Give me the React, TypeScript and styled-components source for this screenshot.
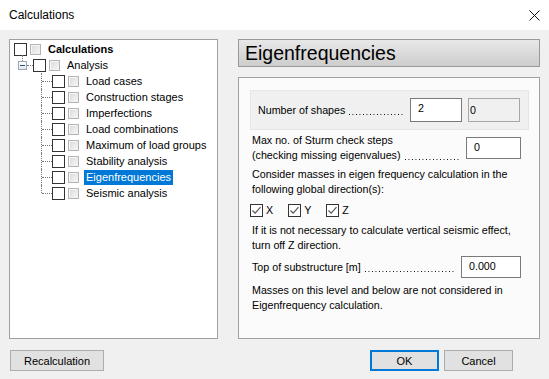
import React from "react"
import styled, { createGlobalStyle } from "styled-components"

const GlobalStyle = createGlobalStyle`
  html, body {
    margin: 0;
    padding: 0;
    background: #f0f0f0;
  }
  body {
    font-family: "Liberation Sans", Arial, sans-serif;
    font-size: 11px;
    color: #000;
  }
`

interface TreeItem {
  label: string
  selected?: boolean
}

const children: TreeItem[] = [
  { label: "Load cases" },
  { label: "Construction stages" },
  { label: "Imperfections" },
  { label: "Load combinations" },
  { label: "Maximum of load groups" },
  { label: "Stability analysis" },
  { label: "Eigenfrequencies", selected: true },
  { label: "Seismic analysis" },
]

const CheckMark = () => (
  <svg width="11" height="11" viewBox="0 0 11 11">
    <path d="M1.5 5.5 L4.2 8.2 L9.5 2.2" fill="none" stroke="#555" strokeWidth="1.2" />
  </svg>
)

const CloseIcon = () => (
  <svg width="11" height="11" viewBox="0 0 11 11">
    <path d="M0.5 0.5 L10.5 10.5 M10.5 0.5 L0.5 10.5" stroke="#111" strokeWidth="1" />
  </svg>
)

const App = () => {
  return (
    <Window>
      <GlobalStyle />
      <TitleBar>
        <Title>Calculations</Title>
        <CloseButton>
          <CloseIcon />
        </CloseButton>
      </TitleBar>
      <Body>
        <Main>
          <TreePanel>
            <TreeRow>
              <BlackBox />
              <GrayBox />
              <NodeText bold>Calculations</NodeText>
            </TreeRow>
            <TreeRow indent={4}>
              <Expander>
                <MinusSign />
              </Expander>
              <HLine width={6} />
              <BlackBox />
              <GrayBox />
              <NodeText>Analysis</NodeText>
            </TreeRow>
            {children.map((c, i) => (
              <TreeRow key={c.label} indent={27}>
                <Connector last={i === children.length - 1} />
                <BlackBox />
                <GrayBox />
                <NodeText selected={c.selected}>{c.label}</NodeText>
              </TreeRow>
            ))}
          </TreePanel>
          <RightColumn>
            <Header>Eigenfrequencies</Header>
            <Content>
              <ShadedBox>
                <LabelLine>
                  <span>Number of shapes</span>
                  <Leader />
                </LabelLine>
                <Input>2</Input>
                <Input disabled>0</Input>
              </ShadedBox>

              <FieldRow mt={3}>
                <MultiLabel>
                  <div>Max no. of Sturm check steps</div>
                  <LabelLine>
                    <span>(checking missing eigenvalues)</span>
                    <Leader />
                  </LabelLine>
                </MultiLabel>
                <Input small>0</Input>
              </FieldRow>

              <Paragraph mt={4}>
                Consider masses in eigen frequency calculation in the
                <br />
                following global direction(s):
              </Paragraph>

              <Checks>
                <CheckItem>
                  <CheckBox>
                    <CheckMark />
                  </CheckBox>
                  X
                </CheckItem>
                <CheckItem>
                  <CheckBox>
                    <CheckMark />
                  </CheckBox>
                  Y
                </CheckItem>
                <CheckItem>
                  <CheckBox>
                    <CheckMark />
                  </CheckBox>
                  Z
                </CheckItem>
              </Checks>

              <Paragraph mt={6}>
                If it is not necessary to calculate vertical seismic effect,
                <br />
                turn off Z direction.
              </Paragraph>

              <FieldRow mt={4}>
                <LabelLine>
                  <span>Top of substructure [m]</span>
                  <Leader />
                </LabelLine>
                <Input small wide>0.000</Input>
              </FieldRow>

              <Paragraph mt={5}>
                Masses on this level and below are not considered in
                <br />
                Eigenfrequency calculation.
              </Paragraph>
            </Content>
          </RightColumn>
        </Main>
        <Footer>
          <Button width={94}>Recalculation</Button>
          <ButtonGroup>
            <Button width={69} primary>
              OK
            </Button>
            <Button width={69}>Cancel</Button>
          </ButtonGroup>
        </Footer>
      </Body>
    </Window>
  )
}

export default App

const Window = styled.div`
  width: 549px;
  height: 379px;
  display: flex;
  flex-direction: column;
  background: #f0f0f0;
  overflow: hidden;
`

const TitleBar = styled.div`
  height: 30px;
  background: #fff;
  display: flex;
  align-items: center;
  justify-content: space-between;
  padding: 0 9px 0 9px;
  box-sizing: border-box;
`

const Title = styled.div`
  font-family: "Liberation Sans", Arial, sans-serif;
  font-size: 12px;
  color: #000;
`

const CloseButton = styled.div`
  width: 11px;
  height: 11px;
  display: flex;
`

const Body = styled.div`
  flex: 1;
  display: flex;
  flex-direction: column;
  padding: 9px 0 0 9px;
`

const Main = styled.div`
  display: flex;
  gap: 20px;
  height: 300px;
`

const TreePanel = styled.div`
  width: 209px;
  box-sizing: border-box;
  border: 1px solid #a0a0a0;
  background: #fff;
  padding: 1px 0 0 4px;
`

const TreeRow = styled.div<{ indent?: number }>`
  height: 16px;
  display: flex;
  align-items: center;
  padding-left: ${(p) => p.indent || 0}px;
`

const BlackBox = styled.span`
  width: 13px;
  height: 13px;
  box-sizing: border-box;
  border: 1px solid #333;
  background: #fff;
  flex-shrink: 0;
`

const GrayBox = styled.span`
  width: 11px;
  height: 11px;
  box-sizing: border-box;
  margin-left: 3px;
  border: 1px solid #b4b4b4;
  background: linear-gradient(135deg, #dadada 0%, #ebebeb 60%, #f6f6f6 100%);
  box-shadow: inset 1px 1px 0 #f6f6f6;
  flex-shrink: 0;
`

const NodeText = styled.span<{ bold?: boolean; selected?: boolean }>`
  margin-left: 5px;
  padding: 1px 2px;
  line-height: 13px;
  font-weight: ${(p) => (p.bold ? "bold" : "normal")};
  background: ${(p) => (p.selected ? "#0078d7" : "transparent")};
  color: ${(p) => (p.selected ? "#fff" : "#000")};
  white-space: nowrap;
`

const Expander = styled.span`
  width: 9px;
  height: 9px;
  box-sizing: border-box;
  border: 1px solid #9aa7b8;
  background: linear-gradient(#fff, #e4e8ee);
  display: flex;
  align-items: center;
  justify-content: center;
  flex-shrink: 0;
  position: relative;

  &::before {
    content: "";
    position: absolute;
    left: 3px;
    top: -7px;
    height: 6px;
    border-left: 1px dotted #777;
  }
`

const MinusSign = styled.span`
  width: 5px;
  height: 1px;
  background: #2b4d80;
`

const HLine = styled.span<{ width: number }>`
  width: ${(p) => p.width}px;
  border-top: 1px dotted #777;
  flex-shrink: 0;
`

const Connector = styled.span<{ last?: boolean }>`
  width: 11px;
  height: 16px;
  position: relative;
  flex-shrink: 0;

  &::before {
    content: "";
    position: absolute;
    left: 0;
    top: 0;
    height: ${(p) => (p.last ? "8px" : "16px")};
    border-left: 1px dotted #777;
  }
  &::after {
    content: "";
    position: absolute;
    left: 1px;
    right: 0;
    top: 8px;
    border-top: 1px dotted #777;
  }
`

const RightColumn = styled.div`
  width: 302px;
  display: flex;
  flex-direction: column;
  gap: 10px;
`

const Header = styled.div`
  height: 28px;
  box-sizing: border-box;
  border: 1px solid #999;
  background: linear-gradient(#e8e8e8, #cdcdcd);
  font-size: 19.5px;
  line-height: 27px;
  padding-left: 6px;
  color: #000;
`

const Content = styled.div`
  flex: 1;
  box-sizing: border-box;
  border: 1px solid #a0a0a0;
  background: #fbfbfb;
  padding: 12px 10px 0 11px;
  display: flex;
  flex-direction: column;
  font-size: 10.7px;
`

const ShadedBox = styled.div`
  height: 40px;
  box-sizing: border-box;
  border: 1px solid #e6e6e6;
  background: #f0f0f0;
  display: flex;
  align-items: center;
  padding: 0 8px 0 7px;
`

const LabelLine = styled.div`
  flex: 1;
  min-width: 0;
  display: flex;
  align-items: stretch;
  line-height: 15px;
  white-space: nowrap;
`

const Leader = styled.span`
  flex: 1;
  min-width: 0;
  margin: 0 6px 0 4px;
  background-image: linear-gradient(to right, #000 1px, transparent 1px);
  background-size: 3.5px 1px;
  background-repeat: repeat-x;
  background-position: left calc(100% - 3px);
`

const Input = styled.div<{ disabled?: boolean; small?: boolean; wide?: boolean }>`
  width: ${(p) => (p.wide ? 60 : p.small ? 55 : 52)}px;
  height: ${(p) => (p.small ? 22 : 24)}px;
  box-sizing: border-box;
  border: 1px solid ${(p) => (p.disabled ? "#a8a8a8" : "#7a7a7a")};
  background: ${(p) => (p.disabled ? "#f0f0f0" : "#fff")};
  padding: ${(p) => (p.disabled ? "5px 1px" : "3px 7px")};
  line-height: 13px;
  margin-left: ${(p) => (p.disabled ? 6 : 0)}px;
  flex-shrink: 0;
`

const FieldRow = styled.div<{ mt: number }>`
  display: flex;
  align-items: center;
  margin-top: ${(p) => p.mt}px;
  padding: 0 8px 0 2px;
`

const MultiLabel = styled.div`
  flex: 1;
  min-width: 0;
  line-height: 15px;
`

const Paragraph = styled.div<{ mt: number }>`
  margin-top: ${(p) => p.mt}px;
  padding-left: 2px;
  line-height: 14.5px;
  white-space: nowrap;
`

const Checks = styled.div`
  display: flex;
  gap: 15px;
  margin-top: 8px;
  height: 13px;
  align-items: center;
`

const CheckItem = styled.div`
  display: flex;
  align-items: center;
  gap: 3px;
  line-height: 13px;
`

const CheckBox = styled.span`
  width: 13px;
  height: 13px;
  box-sizing: border-box;
  border: 1px solid #333;
  background: #fff;
  display: flex;
  align-items: center;
  justify-content: center;
`

const Footer = styled.div`
  display: flex;
  justify-content: space-between;
  margin-top: 11px;
  padding: 0 36px 0 1px;
`

const ButtonGroup = styled.div`
  display: flex;
  gap: 5px;
`

const Button = styled.div<{ width: number; primary?: boolean }>`
  width: ${(p) => p.width}px;
  height: 21px;
  box-sizing: border-box;
  border: ${(p) => (p.primary ? "2px solid #0078d7" : "1px solid #adadad")};
  background: #e1e1e1;
  display: flex;
  align-items: center;
  justify-content: center;
  font-size: 11px;
`
